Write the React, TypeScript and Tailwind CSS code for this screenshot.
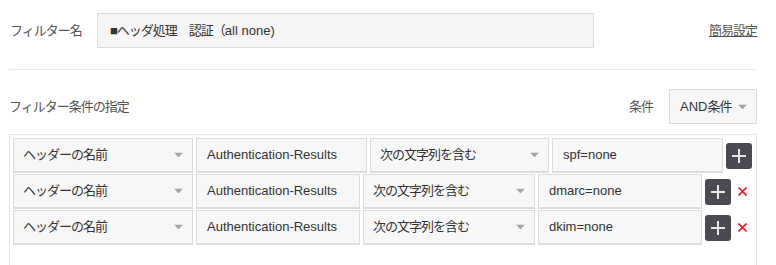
const JP = "tracking-[-1px]";

function Arrow() {
  return (
    <svg width="9" height="5" viewBox="0 0 9 5" className="absolute right-[9px] top-1/2 -translate-y-1/2">
      <path d="M0 0 L9 0 L4.5 5 Z" fill="#a6a6a6" />
    </svg>
  );
}

function SelectCell({ text, wide }: { text: string; wide?: boolean }) {
  return (
    <div
      className={`relative flex items-center h-full bg-[#f7f7f7] border border-[#dcdcdc] border-b-2 pl-[9px] ${
        wide ? "w-[180px] shrink-0 pr-[20px]" : "flex-[1_1_0] min-w-0 pr-[19px]"
      }`}
    >
      <span className={`whitespace-nowrap ${JP}`}>{text}</span>
      <Arrow />
    </div>
  );
}

function TextCell({ text }: { text: string }) {
  return (
    <div className="flex-[1_1_0] min-w-0 flex items-center h-full bg-[#f7f7f7] border border-[#dcdcdc] border-b-2 px-[10px] whitespace-nowrap overflow-hidden">
      {text}
    </div>
  );
}

function PlusButton() {
  return (
    <button className="shrink-0 w-[26px] h-[26px] rounded-[3px] bg-[#4a4a52] flex items-center justify-center">
      <svg width="16" height="16" viewBox="0 0 16 16">
        <path d="M8 1 V15 M1 8 H15" stroke="#e6e6e6" strokeWidth="2" />
      </svg>
    </button>
  );
}

function ConditionRow({ value, removable }: { value: string; removable?: boolean }) {
  return (
    <div className="flex items-center h-[35px] gap-[3px]">
      <SelectCell text="ヘッダーの名前" wide />
      <TextCell text="Authentication-Results" />
      <SelectCell text="次の文字列を含む" />
      <TextCell text={value} />
      <PlusButton />
      {removable && (
        <svg width="9" height="9" viewBox="0 0 9 9" className="shrink-0 ml-[4px] mr-[5px]">
          <path d="M0.5 0.5 L8.5 8.5 M8.5 0.5 L0.5 8.5" stroke="#e8202a" strokeWidth="1.6" />
        </svg>
      )}
    </div>
  );
}

export default function App() {
  return (
    <div className="w-[776px] h-[265px] overflow-hidden bg-white text-[13px] text-[#333] font-['Liberation_Sans','Noto_Sans_CJK_JP',sans-serif]">
      <div className="flex items-center pt-[13px] pl-[10px] pr-[19px]">
        <div className={`w-[87px] text-[#555] ${JP}`}>フィルター名</div>
        <div className="w-[497px] h-[35px] flex items-center border border-[#dcdcdc] bg-[#f5f5f5] pl-[12px]">
          <span className={JP}>■ヘッダ処理　認証（</span>
          <span>all none)</span>
        </div>
        <a className={`ml-auto underline text-[#555] ${JP}`}>簡易設定</a>
      </div>

      <div className="ml-[9px] mr-[19px] mt-[21px] h-px bg-[#ebebeb]" />

      <div className="flex items-center h-[35px] mt-[19px] pl-[9px] pr-[19px]">
        <div className={`text-[#555] ${JP}`}>フィルター条件の指定</div>
        <div className={`ml-auto text-[#555] ${JP}`}>条件</div>
        <div className="relative ml-[16px] w-[88px] h-full flex items-center border border-[#dcdcdc] bg-[#f7f7f7] pl-[10px]">
          <span>AND</span>
          <span className={JP}>条件</span>
          <Arrow />
        </div>
      </div>

      <div className="mt-[10px] ml-[9px] w-[748px] border border-[#e6e6e6] pt-[3px] pl-[3px] pr-[4px] pb-[40px] flex flex-col gap-[1px]">
        <ConditionRow value="spf=none" />
        <ConditionRow value="dmarc=none" removable />
        <ConditionRow value="dkim=none" removable />
      </div>
    </div>
  );
}
